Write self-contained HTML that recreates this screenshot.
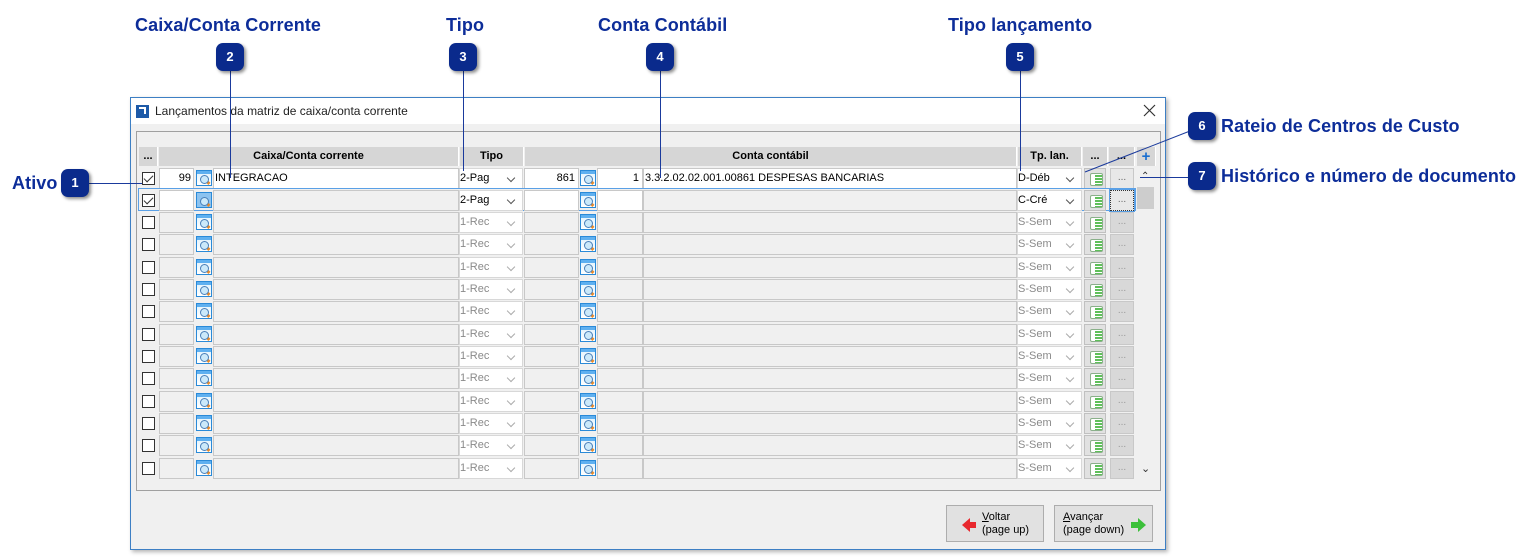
<!DOCTYPE html>
<html><head><meta charset="utf-8"><style>
*{box-sizing:border-box;margin:0;padding:0}
body{width:1533px;height:560px;background:#fff;position:relative;overflow:hidden;font-family:"Liberation Sans",sans-serif;font-size:11px;color:#000}
.a{position:absolute}
.t{position:absolute;font-weight:bold;color:#0d2d99;font-size:18px;white-space:nowrap;letter-spacing:0.1px}
.b{position:absolute;width:28px;height:28px;border-radius:7px;background:#0a2a8c;color:#fff;font-weight:bold;font-size:13px;text-align:center;line-height:28px;box-shadow:2px 2px 3px rgba(0,0,0,.45)}
.vl{position:absolute;width:1px;background:#1a3a9c}
.hl{position:absolute;height:1px;background:#1a3a9c}
.win{left:130px;top:97px;width:1036px;height:453px;border:1px solid #3d7fc4;background:#f0f0f0;box-shadow:2px 2px 4px rgba(0,0,0,.3)}
.tb{left:0;top:0;width:1034px;height:26px;background:#fff}
.panel{left:136px;top:131px;width:1025px;height:360px;border:1px solid #a0a0a0;background:#f0f0f0}
.h{position:absolute;top:147px;height:19px;background:#d6d6d6;border-right:1px solid #fff;font-weight:bold;text-align:center;line-height:19px;font-size:11px}
.r{position:absolute;left:0;width:1533px;height:21px}
.r div{position:absolute;top:0;height:21px}
.cb{left:142px!important;top:4px!important;width:13px;height:13px!important;border:1px solid #333;background:#fff}
.c1{left:159px;width:35px;border:1px solid #c8c8c8;background:#f0f0f0;text-align:right;padding-right:2px;line-height:19px}
.s1,.s2{width:16px;height:16px!important;top:2px!important;border:1px solid #2a8ad8;background:linear-gradient(#5fb0f0 0 3px,#e6f4fd 3px,#fff)}
.s1{left:196px}.s2{left:580px}
.s1:after,.s2:after{content:"";position:absolute;left:3px;top:4px;width:7px;height:7px;border:1.5px solid #4a7fb8;border-radius:50%;background:#cbe9fa}
.s1:before,.s2:before{content:"";position:absolute;left:9px;top:10px;width:4px;height:3px;background:#e88a2a;transform:rotate(45deg)}
.nm{left:213px;width:246px;border:1px solid #c8c8c8;background:#f0f0f0;line-height:19px;padding-left:1px}
.tp{left:459px;width:64px;border:1px solid #d8d8d8;background:#fff;color:#8a8a8a;line-height:19px}
.tp:after,.tl:after{content:"";position:absolute;right:8px;top:6px;width:5px;height:5px;border-right:1px solid #aaa;border-bottom:1px solid #aaa;transform:rotate(45deg)}
.c2{left:524px;width:55px;border:1px solid #c8c8c8;background:#f0f0f0;text-align:right;padding-right:3px;line-height:19px}
.nu{left:597px;width:46px;border:1px solid #c8c8c8;background:#f0f0f0;text-align:right;padding-right:3px;line-height:19px}
.de{left:643px;width:374px;border:1px solid #c8c8c8;background:#f0f0f0;line-height:19px;padding-left:1px}
.tl{left:1017px;width:65px;border:1px solid #d8d8d8;background:#fff;color:#8a8a8a;line-height:19px}
.bt{left:1084px;width:22px;border:1px solid #c0c0c0;background:#e1e1e1}
.bt:after{content:"";position:absolute;left:5px;top:4px;width:11px;height:11px;border:1px solid #8ab08a;border-radius:2px;background:linear-gradient(90deg,#fff 0 4px,transparent 4px),repeating-linear-gradient(#fff 0 1px,#5fc05a 1px 3px)}
.dd{left:1110px;width:24px;border:1px solid #c8c8c8;background:#d8d8d8;color:#999;text-align:center;line-height:17px;font-size:10px}
.en .c1,.en .c2,.en .nu,.en .nm,.en .de{background:#fff}
.en .tp,.en .tl{color:#000}
.en .tp:after,.en .tl:after{border-color:#555}
.en .dd{background:#e8e8e8;color:#666}
.ck:after{content:"";position:absolute;left:3px;top:0px;width:4px;height:8px;border-right:1.5px solid #333;border-bottom:1.5px solid #333;transform:rotate(45deg)}
.btn{position:absolute;top:505px;height:37px;border:1px solid #adadad;background:#e1e1e1;font-size:11px;line-height:13px}
</style></head><body>

<div class="t" style="left:135px;top:15px">Caixa/Conta Corrente</div>
<div class="t" style="left:446px;top:15px">Tipo</div>
<div class="t" style="left:598px;top:15px">Conta Contábil</div>
<div class="t" style="left:948px;top:15px">Tipo lançamento</div>
<div class="t" style="left:12px;top:173px">Ativo</div>
<div class="t" style="left:1221px;top:116px">Rateio de Centros de Custo</div>
<div class="t" style="left:1221px;top:166px">Histórico e número de documento</div>

<div class="a win"><div class="a tb">
<div class="a" style="left:5px;top:7px;width:13px;height:13px;background:#1d5aa8"></div>
<div class="a" style="left:8px;top:9px;width:7px;height:7px;border-top:2px solid #fff;border-right:2px solid #fff"></div>
<div class="a" style="left:24px;top:6px;font-size:12px;color:#222">Lançamentos da matriz de caixa/conta corrente</div>
<svg class="a" style="left:1012px;top:6px" width="13" height="13"><path d="M1 1L12 12M12 1L1 12" stroke="#333" stroke-width="1.2"/></svg>
</div></div>
<div class="a panel"></div>

<div class="h" style="left:139px;width:19px">...</div>
<div class="h" style="left:159px;width:300px">Caixa/Conta corrente</div>
<div class="h" style="left:460px;width:64px">Tipo</div>
<div class="h" style="left:525px;width:492px">Conta contábil</div>
<div class="h" style="left:1018px;width:64px">Tp. lan.</div>
<div class="h" style="left:1083px;width:25px">...</div>
<div class="h" style="left:1109px;width:26px">...</div>
<div class="h" style="left:1137px;width:19px;color:#1a6fd0;font-size:15px">+</div>
<div class="a" style="left:1137px;top:187px;width:17px;height:22px;background:#cdcdcd"></div>
<div class="a" style="left:1141px;top:171px;font-size:10px;color:#333">⌃</div>
<div class="a" style="left:1141px;top:462px;font-size:11px;color:#333">⌄</div>

<div class="r en" style="top:168px"><div class="cb ck"></div><div class="c1">99</div><div class="s1"></div><div class="nm">INTEGRACAO</div><div class="tp">2-Pag</div><div class="c2">861</div><div class="s2"></div><div class="nu">1</div><div class="de">3.3.2.02.02.001.00861 DESPESAS BANCARIAS</div><div class="tl">D-Déb</div><div class="bt"></div><div class="dd">...</div></div>
<div class="a" style="left:138px;top:188px;width:998px;height:23px;border:1px solid #5aa0e6"></div>
<div class="r en" style="top:190px"><div class="cb ck"></div><div class="c1"></div><div class="s1" style="background:#8cc3f0"></div><div class="nm" style="background:#f0f0f0"></div><div class="tp">2-Pag</div><div class="c2"></div><div class="s2"></div><div class="nu"></div><div class="de" style="background:#f0f0f0"></div><div class="tl">C-Cré</div><div class="bt"></div><div class="dd" style="border:1px dotted #333;outline:1px solid #5aa0e6">...</div></div>
<div class="r" style="top:212px"><div class="cb"></div><div class="c1"></div><div class="s1"></div><div class="nm"></div><div class="tp">1-Rec</div><div class="c2"></div><div class="s2"></div><div class="nu"></div><div class="de"></div><div class="tl">S-Sem</div><div class="bt"></div><div class="dd">...</div></div>
<div class="r" style="top:234px"><div class="cb"></div><div class="c1"></div><div class="s1"></div><div class="nm"></div><div class="tp">1-Rec</div><div class="c2"></div><div class="s2"></div><div class="nu"></div><div class="de"></div><div class="tl">S-Sem</div><div class="bt"></div><div class="dd">...</div></div>
<div class="r" style="top:257px"><div class="cb"></div><div class="c1"></div><div class="s1"></div><div class="nm"></div><div class="tp">1-Rec</div><div class="c2"></div><div class="s2"></div><div class="nu"></div><div class="de"></div><div class="tl">S-Sem</div><div class="bt"></div><div class="dd">...</div></div>
<div class="r" style="top:279px"><div class="cb"></div><div class="c1"></div><div class="s1"></div><div class="nm"></div><div class="tp">1-Rec</div><div class="c2"></div><div class="s2"></div><div class="nu"></div><div class="de"></div><div class="tl">S-Sem</div><div class="bt"></div><div class="dd">...</div></div>
<div class="r" style="top:301px"><div class="cb"></div><div class="c1"></div><div class="s1"></div><div class="nm"></div><div class="tp">1-Rec</div><div class="c2"></div><div class="s2"></div><div class="nu"></div><div class="de"></div><div class="tl">S-Sem</div><div class="bt"></div><div class="dd">...</div></div>
<div class="r" style="top:324px"><div class="cb"></div><div class="c1"></div><div class="s1"></div><div class="nm"></div><div class="tp">1-Rec</div><div class="c2"></div><div class="s2"></div><div class="nu"></div><div class="de"></div><div class="tl">S-Sem</div><div class="bt"></div><div class="dd">...</div></div>
<div class="r" style="top:346px"><div class="cb"></div><div class="c1"></div><div class="s1"></div><div class="nm"></div><div class="tp">1-Rec</div><div class="c2"></div><div class="s2"></div><div class="nu"></div><div class="de"></div><div class="tl">S-Sem</div><div class="bt"></div><div class="dd">...</div></div>
<div class="r" style="top:368px"><div class="cb"></div><div class="c1"></div><div class="s1"></div><div class="nm"></div><div class="tp">1-Rec</div><div class="c2"></div><div class="s2"></div><div class="nu"></div><div class="de"></div><div class="tl">S-Sem</div><div class="bt"></div><div class="dd">...</div></div>
<div class="r" style="top:391px"><div class="cb"></div><div class="c1"></div><div class="s1"></div><div class="nm"></div><div class="tp">1-Rec</div><div class="c2"></div><div class="s2"></div><div class="nu"></div><div class="de"></div><div class="tl">S-Sem</div><div class="bt"></div><div class="dd">...</div></div>
<div class="r" style="top:413px"><div class="cb"></div><div class="c1"></div><div class="s1"></div><div class="nm"></div><div class="tp">1-Rec</div><div class="c2"></div><div class="s2"></div><div class="nu"></div><div class="de"></div><div class="tl">S-Sem</div><div class="bt"></div><div class="dd">...</div></div>
<div class="r" style="top:435px"><div class="cb"></div><div class="c1"></div><div class="s1"></div><div class="nm"></div><div class="tp">1-Rec</div><div class="c2"></div><div class="s2"></div><div class="nu"></div><div class="de"></div><div class="tl">S-Sem</div><div class="bt"></div><div class="dd">...</div></div>
<div class="r" style="top:458px"><div class="cb"></div><div class="c1"></div><div class="s1"></div><div class="nm"></div><div class="tp">1-Rec</div><div class="c2"></div><div class="s2"></div><div class="nu"></div><div class="de"></div><div class="tl">S-Sem</div><div class="bt"></div><div class="dd">...</div></div>

<div class="btn" style="left:946px;width:98px">
<div class="a" style="left:15px;top:12px;width:0;height:0;border-top:7px solid transparent;border-bottom:7px solid transparent;border-right:8px solid #e8282e"></div>
<div class="a" style="left:22px;top:16px;width:7px;height:6px;background:#e8282e"></div>
<div class="a" style="left:35px;top:5px"><u>V</u>oltar<br>(page up)</div></div>
<div class="btn" style="left:1054px;width:99px">
<div class="a" style="left:8px;top:5px"><u>A</u>vançar<br>(page down)</div>
<div class="a" style="left:76px;top:16px;width:7px;height:6px;background:#3cc03a"></div>
<div class="a" style="left:83px;top:12px;width:0;height:0;border-top:7px solid transparent;border-bottom:7px solid transparent;border-left:8px solid #3cc03a"></div></div>

<div class="vl" style="left:230px;top:70px;height:108px"></div>
<div class="vl" style="left:463px;top:70px;height:101px"></div>
<div class="vl" style="left:660px;top:70px;height:108px"></div>
<div class="vl" style="left:1020px;top:70px;height:101px"></div>
<div class="hl" style="left:89px;top:183px;width:53px"></div>
<div class="hl" style="left:1140px;top:177px;width:50px"></div>
<svg class="a" style="left:0;top:0" width="1533" height="560"><line x1="1190" y1="131" x2="1085" y2="172" stroke="#1a3a9c" stroke-width="1"/></svg>

<div class="b" style="left:216px;top:43px">2</div>
<div class="b" style="left:449px;top:43px">3</div>
<div class="b" style="left:646px;top:43px">4</div>
<div class="b" style="left:1006px;top:43px">5</div>
<div class="b" style="left:61px;top:169px">1</div>
<div class="b" style="left:1188px;top:112px">6</div>
<div class="b" style="left:1188px;top:162px">7</div>
</body></html>
